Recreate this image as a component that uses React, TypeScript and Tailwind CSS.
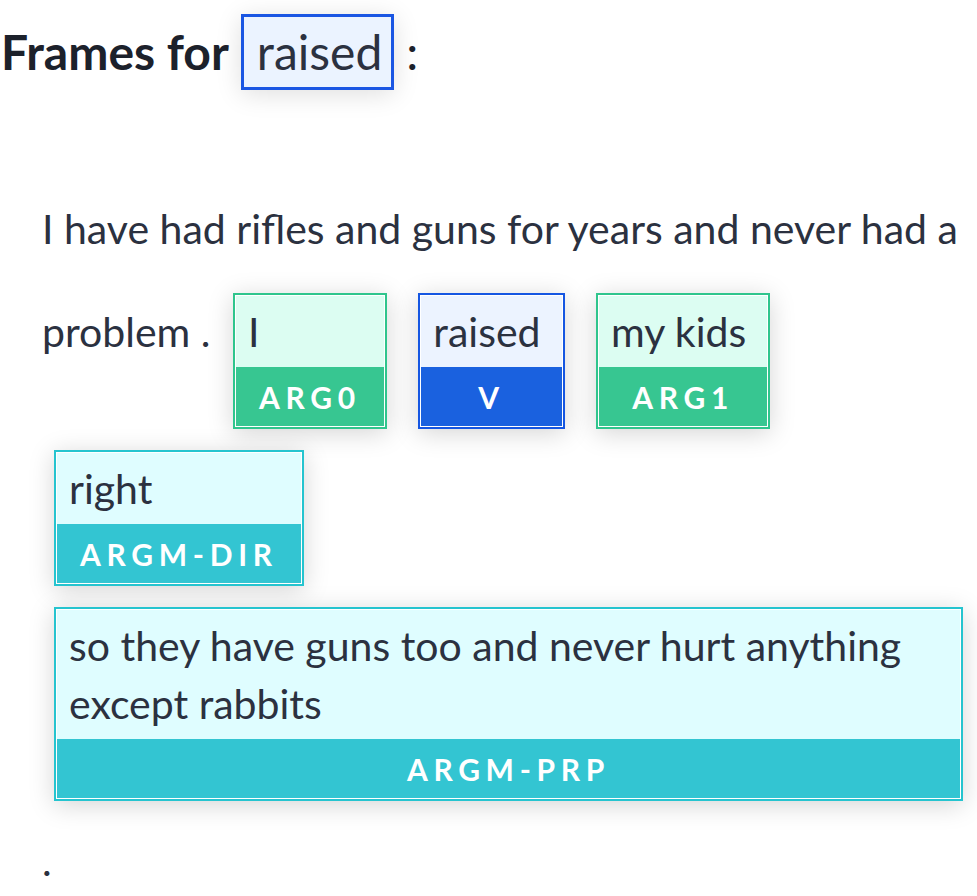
const tones = {
  green: {
    border: 'border-[#2fc58d]',
    bg: 'bg-[#dcfdf2]',
    label: 'bg-[#37c691]',
  },
  blue: {
    border: 'border-[#1556e2]',
    bg: 'bg-[#ecf3ff]',
    label: 'bg-[#1a61df]',
  },
  cyan: {
    border: 'border-[#25c4cf]',
    bg: 'bg-[#dffdff]',
    label: 'bg-[#33c5d2]',
  },
};

type Tone = keyof typeof tones;

const Frame = ({ text, label, tone }: { text: string; label: string; tone: Tone }) => {
  const t = tones[tone];
  return (
    <span
      className={`mt-3 mr-[9px] mb-2 ml-3 inline-flex flex-col border-2 bg-white p-px align-baseline shadow-[0_4px_24px_rgba(0,0,0,0.17)] ${t.border}`}
    >
      <span className={`pt-[7px] pr-[21px] pb-[6px] pl-3 text-[41px] leading-[58px] ${t.bg}`}>{text}</span>
      <span
        className={`flex h-[59px] items-center justify-center px-[23px] text-[30px] leading-none font-bold tracking-[0.19em] text-white ${t.label}`}
      >
        {label}
      </span>
    </span>
  );
};

const App = () => {
  return (
    <div className="min-h-screen bg-white font-['Lato',sans-serif] text-[#2b3140]">
      {/* Title */}
      <div className="flex items-baseline pt-[14px] pl-px text-[48px] leading-[70px] text-[#1c212b]">
        <span className="font-bold">Frames for</span>
        <span className="ml-3 border-[3px] border-[#1a56e3] bg-[#ebf3ff] pr-[9px] pl-[13px] text-[#2b3140] shadow-[0_4px_24px_rgba(0,0,0,0.13)]">
          raised
        </span>
        <span className="ml-3">:</span>
      </div>

      {/* Sentence with frames */}
      <div className="mt-[87px] ml-[42px] w-[930px] text-[41px] leading-[103px]">
        I have had rifles and guns for years and never had a problem .{' '}
        <Frame text="I" label="ARG0" tone="green" />{' '}
        <Frame text="raised" label="V" tone="blue" />{' '}
        <Frame text="my kids" label="ARG1" tone="green" />{' '}
        <Frame text="right" label="ARGM-DIR" tone="cyan" />{' '}
        <Frame text="so they have guns too and never hurt anything except rabbits" label="ARGM-PRP" tone="cyan" />{' '}
        .
      </div>
    </div>
  );
};

export default App;
